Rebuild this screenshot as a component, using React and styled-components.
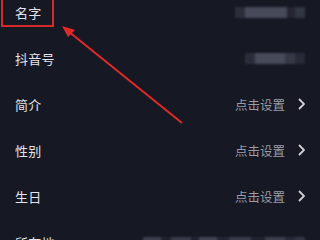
import React from "react";
import styled, { createGlobalStyle } from "styled-components";

const Global = createGlobalStyle`
	html, body {
		margin: 0;
		padding: 0;
		background: #161824;
		overflow: hidden;
	}
	#root {
		width: 320px;
		height: 240px;
	}
`;

const rows = [
	{ label: "名字", blur: [[10, 0.12], [42, 0.28], [8, 0.08], [10, 0.16]] },
	{ label: "抖音号", blur: [[10, 0.12], [30, 0.28], [10, 0.18], [10, 0.1]] },
	{ label: "简介", action: "点击设置" },
	{ label: "性别", action: "点击设置" },
	{ label: "生日", action: "点击设置" },
	{
		label: "所在地",
		blur: [
			[18, 0.22], [10, 0.06], [20, 0.2], [8, 0.06], [18, 0.24],
			[12, 0.08], [22, 0.2], [14, 0.06], [20, 0.22], [10, 0.1], [10, 0.16],
		],
	},
];

const App = () => {
	return (
		<Page>
			<Global />
			<List>
				{rows.map((row) => (
					<Row key={row.label}>
						<Label>{row.label}</Label>
						{row.action ? (
							<Action>
								<ActionText>{row.action}</ActionText>
								<Chevron viewBox="0 0 7 12">
									<polyline points="1,1 6,6 1,11" />
								</Chevron>
							</Action>
						) : (
							<Blur>
								{row.blur.map(([w, a], i) => (
									<Chunk key={i} $w={w} $a={a} />
								))}
							</Blur>
						)}
					</Row>
				))}
			</List>
			<Marker viewBox="0 0 320 240">
				<rect x="2" y="-10" width="51" height="36" />
				<line x1="182" y1="123" x2="68" y2="31" />
				<polygon points="62,26 75,30 68,37" />
			</Marker>
		</Page>
	);
};

export default App;

const Page = styled.div`
	position: relative;
	width: 320px;
	height: 240px;
	overflow: hidden;
	background: #161824;
	font-family: "Noto Sans CJK SC", "Noto Sans", sans-serif;
`;

const List = styled.div`
	display: flex;
	flex-direction: column;
	margin-top: -11px;
`;

const Row = styled.div`
	height: 46px;
	display: flex;
	align-items: center;
	justify-content: space-between;
	padding: 0 15px;
`;

const Label = styled.span`
	font-size: 13px;
	color: #e4e4e8;
	letter-spacing: 0.3px;
`;

const Action = styled.div`
	display: flex;
	align-items: center;
	gap: 13px;
`;

const ActionText = styled.span`
	font-size: 12.5px;
	color: #9c9ca4;
`;

const Chevron = styled.svg`
	width: 7px;
	height: 12px;
	fill: none;
	stroke: #d0d0d6;
	stroke-width: 1.8;
`;

const Blur = styled.div`
	display: flex;
	height: 11px;
	filter: blur(1px);
`;

const Chunk = styled.div`
	width: ${({ $w }) => $w}px;
	background: rgba(200, 205, 225, ${({ $a }) => $a});
`;

const Marker = styled.svg`
	position: absolute;
	left: 0;
	top: 0;
	width: 320px;
	height: 240px;
	pointer-events: none;
	rect {
		fill: none;
		stroke: #d42a2a;
		stroke-width: 2;
	}
	line {
		stroke: #e02a2a;
		stroke-width: 2;
	}
	polygon {
		fill: #e02a2a;
	}
`;
